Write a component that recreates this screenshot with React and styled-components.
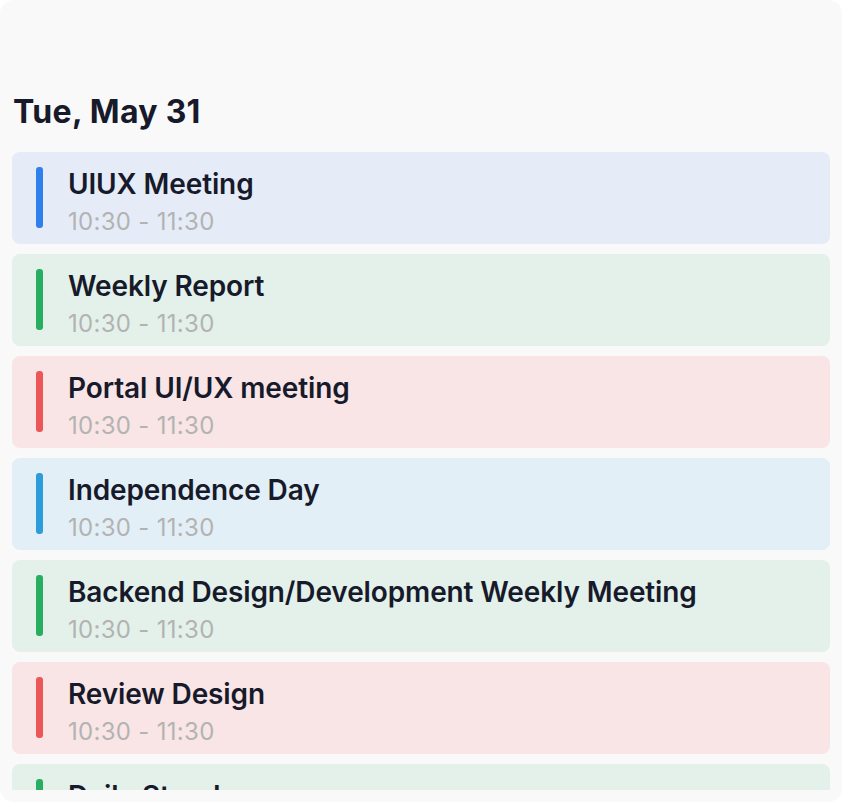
import React from "react";
import styled, { createGlobalStyle } from "styled-components";

const Global = createGlobalStyle`
  html, body { margin: 0; padding: 0; background: #ffffff; }
  body { font-family: "Inter", "Noto Sans", sans-serif; }
  * { box-sizing: border-box; }
`;

const Panel = styled.div`
  width: 842px;
  height: 802px;
  background: #f9f9f9;
  border-radius: 14px;
  padding: 0 12px 12px;
  display: flex;
  flex-direction: column;
  overflow: hidden;
`;

const DayTitle = styled.h2`
  margin: 92px 0 0 1px;
  font-size: 32px;
  line-height: 40px;
  font-weight: 700;
  color: #171a2b;
  letter-spacing: 0.3px;
`;

const List = styled.div`
  margin-top: 20px;
  flex: 1;
  min-height: 0;
  overflow: hidden;
  display: flex;
  flex-direction: column;
  gap: 10px;
`;

const tones = {
  blue: { bg: "#e5ecf8", bar: "#2f80ed" },
  green: { bg: "#e3f1ea", bar: "#27ae60" },
  red: { bg: "#f9e5e5", bar: "#eb5757" },
  sky: { bg: "#e3eff7", bar: "#2d9cdb" },
};

const Card = styled.div`
  flex: none;
  height: 92px;
  border-radius: 8px;
  background: ${(p) => tones[p.$tone].bg};
  display: flex;
  align-items: flex-start;
  padding: 15px 24px 0 24px;
`;

const Bar = styled.span`
  flex: none;
  width: 7px;
  height: 61px;
  border-radius: 3px;
  background: ${(p) => tones[p.$tone].bar};
`;

const Info = styled.div`
  margin-left: 25px;
  display: flex;
  flex-direction: column;
`;

const Name = styled.div`
  font-size: 28px;
  line-height: 34px;
  font-weight: 600;
  color: #171a2b;
  letter-spacing: -0.12px;
  white-space: nowrap;
`;

const Time = styled.div`
  font-size: 24px;
  line-height: 42px;
  font-weight: 400;
  color: #b3b3b3;
  letter-spacing: 0.3px;
`;

const events = [
  { name: "UIUX Meeting", tone: "blue" },
  { name: "Weekly Report", tone: "green" },
  { name: "Portal UI/UX meeting", tone: "red" },
  { name: "Independence Day", tone: "sky" },
  { name: "Backend Design/Development Weekly Meeting", tone: "green" },
  { name: "Review Design", tone: "red" },
  { name: "Daily Standup", tone: "green" },
];

export default function App() {
  return (
    <>
      <Global />
      <Panel>
        <DayTitle>Tue, May 31</DayTitle>
        <List>
          {events.map((e, i) => (
            <Card key={i} $tone={e.tone}>
              <Bar $tone={e.tone} />
              <Info>
                <Name>{e.name}</Name>
                <Time>10:30 - 11:30</Time>
              </Info>
            </Card>
          ))}
        </List>
      </Panel>
    </>
  );
}
